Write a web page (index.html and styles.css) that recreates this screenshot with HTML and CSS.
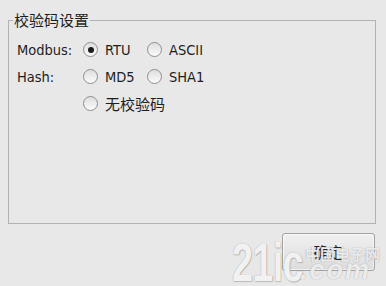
FILE: index.html
```html
<!DOCTYPE html>
<html lang="zh">
<head>
<meta charset="utf-8">
<link rel="stylesheet" href="styles.css">
</head>
<body>
<div class="dialog">
  <fieldset class="group">
    <legend class="cjk">校验码设置</legend>
    <div class="grid">
      <span class="label">Modbus:</span>
      <label class="opt"><span class="radio checked"></span><span>RTU</span></label>
      <label class="opt"><span class="radio"></span><span>ASCII</span></label>
      <span class="label">Hash:</span>
      <label class="opt"><span class="radio"></span><span>MD5</span></label>
      <label class="opt"><span class="radio"></span><span>SHA1</span></label>
      <span></span>
      <label class="opt wide"><span class="radio"></span><span class="cjk">无校验码</span></label>
    </div>
  </fieldset>
  <div class="actions">
    <button class="btn cjk">确定</button>
  </div>
</div>
<div class="watermark">
  <span class="wm-num">21ic</span>
  <span class="wm-cn">中国电子网</span>
  <span class="wm-com">.com</span>
</div>
</body>
</html>
```

FILE: styles.css
```css
html, body {
  margin: 0;
  padding: 0;
  background: #e8e8e8;
  width: 386px;
  height: 286px;
  overflow: hidden;
}
body {
  font-family: "DejaVu Sans Condensed", "DejaVu Sans", "Noto Sans CJK SC", sans-serif;
  font-stretch: condensed;
  font-size: 14.5px;
  color: #1e1e1e;
  position: relative;
}
.cjk {
  font-family: "Noto Sans CJK SC", "DejaVu Sans", sans-serif;
  font-stretch: normal;
  font-size: 15px;
}
.dialog {
  padding: 12px 10px 0 8px;
}
.group {
  margin: 0;
  padding: 0 0 0 8px;
  border: 1px solid #b2b2b2;
  height: 212px;
  box-sizing: border-box;
  width: 368px;
  min-width: 0;
}
.group legend {
  padding: 0 1px;
  margin-left: -4px;
  line-height: 16px;
  height: 16px;
  color: #1e1e1e;
}
.grid {
  display: grid;
  grid-template-columns: 66px 64px auto;
  grid-auto-rows: 27px;
  padding-top: 8px;
  align-items: center;
}
.label {
  line-height: 16px;
}
.opt {
  display: flex;
  align-items: center;
  gap: 7px;
  line-height: 16px;
}
.opt.wide {
  grid-column: 2 / 4;
}
.radio {
  width: 13px;
  height: 13px;
  border: 1px solid #8e8e8e;
  border-radius: 50%;
  background: linear-gradient(#dedede, #fbfbfb);
  display: flex;
  align-items: center;
  justify-content: center;
  flex: none;
}
.radio.checked::after {
  content: "";
  width: 6px;
  height: 6px;
  border-radius: 50%;
  background: #1a1a1a;
}
.actions {
  display: flex;
  justify-content: flex-end;
  padding-top: 9px;
}
.btn {
  width: 93px;
  height: 38px;
  margin-right: 1px;
  border: 1px solid #a2a2a2;
  border-radius: 3px;
  background: linear-gradient(#f0f0f0, #dcdcdc);
  box-shadow: inset 0 0 0 1px rgba(255,255,255,0.6);
  color: #222;
  padding: 0;
  line-height: 16px;
}
.watermark {
  position: absolute;
  left: 232px;
  top: 238px;
  width: 154px;
  height: 48px;
  pointer-events: none;
}
.wm-num {
  position: absolute;
  left: 0;
  top: 0;
  font-family: "Liberation Sans", sans-serif;
  font-stretch: normal;
  font-weight: bold;
  font-size: 54px;
  line-height: 48px;
  letter-spacing: -1px;
  white-space: nowrap;
  color: rgba(252,252,252,0.92);
  text-shadow: 0 0 1px rgba(120,120,120,0.7), 1px 1px 1px rgba(150,150,150,0.5);
  transform: scaleX(0.7);
  transform-origin: left top;
}
.wm-cn {
  position: absolute;
  left: 73px;
  top: 6px;
  font-family: "Noto Sans CJK SC", sans-serif;
  font-weight: bold;
  font-size: 15px;
  line-height: 20px;
  white-space: nowrap;
  color: rgba(252,252,252,0.85);
  text-shadow: 0 0 1px rgba(110,110,110,0.8);
}
.wm-com {
  position: absolute;
  left: 68px;
  top: 19px;
  font-family: "Liberation Sans", sans-serif;
  font-stretch: normal;
  font-weight: bold;
  font-style: italic;
  font-size: 27px;
  line-height: 26px;
  letter-spacing: 2px;
  white-space: nowrap;
  color: rgba(252,252,252,0.85);
  text-shadow: 0 0 1px rgba(110,110,110,0.7);
}
```
